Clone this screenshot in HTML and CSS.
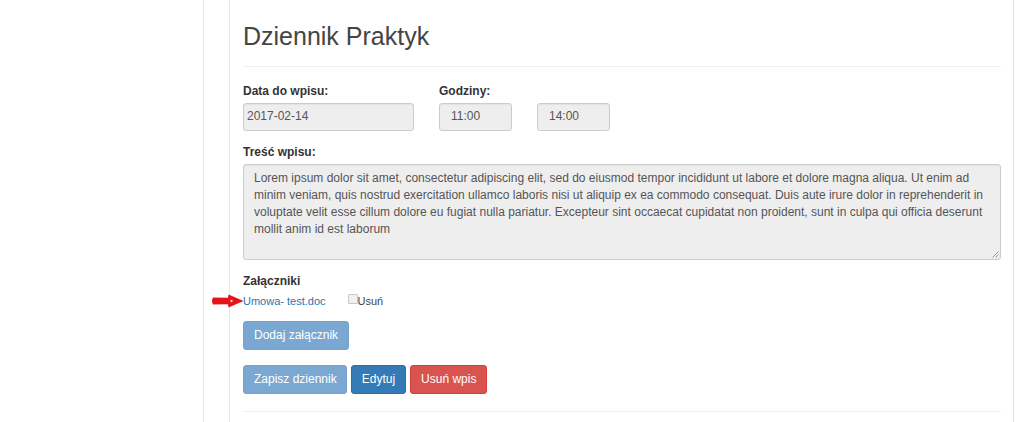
FILE: index.html
```html
<!DOCTYPE html>
<html lang="pl">
<head>
<meta charset="utf-8">
<title>Dziennik Praktyk</title>
<link rel="stylesheet" href="styles.css">
</head>
<body>
<div class="page">
  <aside class="sidebar"></aside>
  <main class="main">
    <section class="panel">
      <header class="page-header">
        <h1>Dziennik Praktyk</h1>
      </header>
      <form class="entry-form">
        <div class="row">
          <div class="form-group date-group">
            <label class="label">Data do wpisu:</label>
            <div class="input date-input">2017-02-14</div>
          </div>
          <div class="form-group hours-group">
            <label class="label">Godziny:</label>
            <div class="hours">
              <div class="input time-input">11:00</div>
              <div class="input time-input">14:00</div>
            </div>
          </div>
        </div>
        <div class="form-group">
          <label class="label">Treść wpisu:</label>
          <div class="textarea">Lorem ipsum dolor sit amet, consectetur adipiscing elit, sed do eiusmod tempor incididunt ut labore et dolore magna aliqua. Ut enim ad minim veniam, quis nostrud exercitation ullamco laboris nisi ut aliquip ex ea commodo consequat. Duis aute irure dolor in reprehenderit in voluptate velit esse cillum dolore eu fugiat nulla pariatur. Excepteur sint occaecat cupidatat non proident, sunt in culpa qui officia deserunt mollit anim id est laborum<span class="resize"><svg width="7" height="7" viewBox="0 0 7 7"><path d="M6.5 0.5 L0.5 6.5 M6.5 3.5 L3.5 6.5" stroke="#999" stroke-width="1"/></svg></span></div>
        </div>
        <div class="form-group attachments">
          <label class="label">Załączniki</label>
          <div class="attachment">
            <svg class="arrow" width="33" height="14" viewBox="0 0 33 14"><path d="M2 3.6 Q0 7 2 10.4 L17 10.2 L17.5 13.5 L32.5 7 L17.5 0.5 L17 3.8 Z" fill="#e3121b"/><circle cx="20.5" cy="7" r="1.2" fill="#f4c4c4"/></svg>
            <a class="file-link" href="#">Umowa- test.doc</a>
            <span class="check"><span class="checkbox"></span>Usuń</span>
          </div>
        </div>
        <button type="button" class="btn btn-light">Dodaj załącznik</button>
        <div class="actions">
          <button type="button" class="btn btn-light btn-save">Zapisz dziennik</button>
          <button type="button" class="btn btn-primary">Edytuj</button>
          <button type="button" class="btn btn-danger">Usuń wpis</button>
        </div>
        <hr class="bottom-rule">
      </form>
    </section>
  </main>
</div>
</body>
</html>
```

FILE: styles.css
```css
* { box-sizing: border-box; }

html, body {
  margin: 0;
  padding: 0;
  background: #fff;
}

body {
  font-family: "Liberation Sans", Arial, Helvetica, sans-serif;
  font-size: 12px;
  line-height: 17px;
  color: #333;
  height: 422px;
  overflow: hidden;
}

.page {
  display: flex;
  height: 422px;
}

.sidebar {
  width: 204px;
  flex: none;
  border-right: 1px solid #e7e7e7;
}

.main {
  flex: none;
  padding-left: 25px;
}

.panel {
  width: 785px;
  height: 422px;
  border-left: 1px solid #e7e7e7;
  border-right: 1px solid #e3e3e3;
  padding: 22px 12px 0 13px;
}

.page-header {
  padding-bottom: 16px;
  border-bottom: 1px solid #eee;
}

.page-header h1 {
  margin: 0;
  font-size: 25px;
  line-height: 28px;
  font-weight: normal;
  color: #444;
}

.entry-form {
  margin-top: 16px;
}

.row {
  display: flex;
  gap: 25px;
}

.form-group {
  margin-bottom: 13px;
}

.label {
  display: block;
  font-weight: bold;
  margin-bottom: 3px;
  color: #333;
}

.input {
  height: 28px;
  padding: 4px 10px;
  background: #eee;
  border: 1px solid #ccc;
  border-radius: 3px;
  color: #555;
  box-shadow: inset 0 1px 1px rgba(0,0,0,0.05);
}

.date-input {
  width: 171px;
  padding-left: 3px;
}

.hours {
  display: flex;
  gap: 25px;
}

.time-input {
  width: 73px;
  padding-left: 11px;
}

.textarea {
  position: relative;
  height: 96px;
  padding: 5px 10px;
  background: #eee;
  border: 1px solid #ccc;
  border-radius: 3px;
  color: #555;
  box-shadow: inset 0 1px 1px rgba(0,0,0,0.05);
}

.resize {
  position: absolute;
  right: 1px;
  bottom: 1px;
  line-height: 0;
}

.attachments {
  margin-bottom: 11px;
}

.attachment {
  position: relative;
  display: flex;
  align-items: center;
  margin-top: 2px;
  font-size: 11px;
}

.arrow {
  position: absolute;
  left: -32px;
  top: 1px;
}

.file-link {
  color: #2a75ae;
  text-decoration: none;
}

.check {
  display: inline-flex;
  align-items: center;
  margin-left: 22px;
  color: #444;
}

.checkbox {
  width: 10px;
  height: 10px;
  margin-top: -5px;
  border: 1px solid #c8c8c8;
  background: #f1f1f1;
  border-radius: 1px;
}

.btn {
  display: inline-block;
  height: 29px;
  padding: 5px 10px;
  font-family: inherit;
  font-size: 12px;
  line-height: 17px;
  border: 1px solid transparent;
  border-radius: 3px;
  color: #fff;
  cursor: pointer;
}

.btn-save {
  padding-right: 9px;
}

.btn-light {
  background: #7aa8d3;
  border-color: #77a3cd;
}

.btn-primary {
  background: #337ab7;
  border-color: #2e6da4;
}

.btn-danger {
  background: #d9534f;
  border-color: #d43f3a;
}

.actions {
  display: flex;
  gap: 4px;
  margin-top: 15px;
}

.bottom-rule {
  margin: 17px 0 0;
  border: 0;
  border-top: 1px solid #eee;
}
```
